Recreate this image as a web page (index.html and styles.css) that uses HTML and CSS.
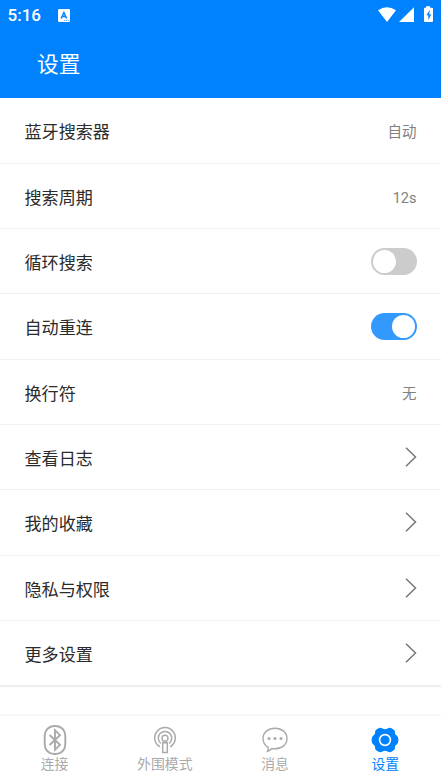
FILE: index.html
```html
<!DOCTYPE html>
<html lang="zh-CN">
<head>
<meta charset="utf-8">
<title>设置</title>
<link rel="stylesheet" href="styles.css">
</head>
<body>
<header class="header">
  <div class="status">
    <span class="time">5:16</span>
    <svg class="badge" width="12" height="13" viewBox="0 0 12 13"><rect width="12" height="13" rx="1.2" fill="#fff"/><path d="M3.2 9.5 5.9 3.5 8.6 9.5M4.2 7.6h3.4" fill="none" stroke="#0082ff" stroke-width="1.5"/><path d="M6.2 11.4h1M8 11.4h1M9.8 11.4h1" stroke="#0082ff" stroke-width=".8"/></svg>
    <svg class="signals" width="56" height="18" viewBox="0 0 56 18"><path d="M0 4.300Q9 -2 18 4.300L9 16Z" fill="#fff"/><path d="M21 16H36V1.200Z" fill="#fff"/><path d="M48 .2h4v1.600h2q1 0 1 1V15q0 1-1 1h-7q-1 0-1-1V2.800q0-1 1-1h1Z" fill="#fff"/><path d="M51.800 4 48.300 9.300h2v4.700l3-5.600h-2Z" fill="#0082ff"/></svg>
  </div>
  <h1 class="title">设置</h1>
</header>
<main class="list">
  <div class="row"><span class="label">蓝牙搜索器</span><span class="value">自动</span></div>
  <div class="row"><span class="label">搜索周期</span><span class="value">12s</span></div>
  <div class="row"><span class="label">循环搜索</span><span class="switch"></span></div>
  <div class="row"><span class="label">自动重连</span><span class="switch on"></span></div>
  <div class="row"><span class="label">换行符</span><span class="value">无</span></div>
  <div class="row"><span class="label">查看日志</span><svg class="arrow" viewBox="0 0 12 20"><path d="M1 .8 10.500 10 1 19.200"/></svg></div>
  <div class="row"><span class="label">我的收藏</span><svg class="arrow" viewBox="0 0 12 20"><path d="M1 .8 10.500 10 1 19.200"/></svg></div>
  <div class="row"><span class="label">隐私与权限</span><svg class="arrow" viewBox="0 0 12 20"><path d="M1 .8 10.500 10 1 19.200"/></svg></div>
  <div class="row"><span class="label">更多设置</span><svg class="arrow" viewBox="0 0 12 20"><path d="M1 .8 10.500 10 1 19.200"/></svg></div>
</main>
<nav class="tabs">
  <div class="tab">
    <svg class="icon" viewBox="0 0 30 30"><rect x="4.700" y="1" width="20.600" height="28" rx="9.500" stroke-width="1.900"/><path d="M9.500 10 20 19.800 15 24.800V5.200L20 10.200 9.500 20" stroke-width="1.900"/></svg>
    <span>连接</span>
  </div>
  <div class="tab">
    <svg class="icon" viewBox="0 0 30 30"><circle cx="15" cy="13.200" r="3"/><path d="M12.700 17.700h4.600v9.800h-4.600ZM10.700 18.300a6.700 6.700 0 1 1 8.600 0M9.800 21.800a10.300 10.300 0 1 1 10.400 0" stroke-width="1.500"/></svg>
    <span>外围模式</span>
  </div>
  <div class="tab">
    <svg class="icon" viewBox="0 0 30 30"><path d="M8.200 22.300C4.700 20.400 3 17.200 3 13.500 3 7.500 8 3.200 15 3.200S27 7.500 27 13.500 22 23.800 15 23.800q-1.600 0-3.100-.3Q10.500 25.500 7.500 26.300 8.500 24.500 8.200 22.300Z" stroke-width="1.400"/><g class="dots"><circle cx="9" cy="13.400" r="1.500"/><circle cx="15" cy="13.400" r="1.500"/><circle cx="21" cy="13.400" r="1.500"/></g></svg>
    <span>消息</span>
  </div>
  <div class="tab active">
    <svg class="icon" viewBox="0 0 30 30"><path class="gear" d="M8.500 3.300Q10.600 2.300 12.400 3.500Q15 5 17.600 3.500Q19.400 2.300 21.500 3.300Q25.300 5 25 8Q25 9.700 26.700 10.400Q28.400 11.400 28.400 15T26.700 19.600Q25 20.300 25 22Q25.300 25 21.500 26.700Q19.400 27.700 17.600 26.500Q15 25 12.400 26.500Q10.600 27.700 8.500 26.700Q4.700 25 5 22Q5 20.300 3.300 19.600Q1.600 18.600 1.600 15T3.300 10.400Q5 9.700 5 8Q4.700 5 8.500 3.300Z"/><circle cx="15" cy="15" r="5.400" stroke="#fff" stroke-width="1.600"/></svg>
    <span>设置</span>
  </div>
</nav>
</body>
</html>
```
FILE: styles.css
```css
* { box-sizing: border-box; }
body {
  margin: 0;
  height: 784px;
  display: flex;
  flex-direction: column;
  overflow: hidden;
  background: #fff;
  color: #2b2b2b;
  font-family: Roboto, "Noto Sans CJK SC", sans-serif;
}
.header { height: 98px; background: #0082ff; color: #fff; }
.status { height: 30px; display: flex; align-items: center; padding: 0 7px 0 7.500px; }
.time { font-size: 17px; font-weight: 500; line-height: 30px; width: 50.500px; }
.signals { margin-left: auto; }
.title { margin: 17px 0 0 37px; font-size: 21.7px; line-height: 35px; font-weight: 400; }
.list { height: 589px; padding-top: 0.3px; border-bottom: 1px solid #eee; }
.row {
  height: 65.33px;
  display: flex;
  align-items: center;
  justify-content: space-between;
  padding: 4px 24.500px 0 24.500px;
  border-bottom: 1px solid #f0f0f0;
  font-size: 17.1px;
  line-height: 27px;
}
.label { padding-top: 1px; }
.value { color: #808080; font-size: 14.5px; padding-top: 1px; }
.switch {
  width: 45.500px;
  height: 27px;
  margin-bottom: 3px;
  display: flex;
  padding: 2px;
  border-radius: 14px;
  background: #ccc;
}
.switch::before { content: ""; width: 23px; height: 23px; border-radius: 50%; background: #fff; }
.switch.on { background: #3399ff; justify-content: flex-end; }
.arrow { width: 12px; height: 20px; margin-bottom: 4px; fill: none; stroke: #777; stroke-width: 1.5; }
.tabs {
  height: 70px;
  margin-top: auto;
  display: flex;
  border-top: 2px solid #f7f7f7;
  color: #aaa;
}
.tab {
  flex: 1;
  display: flex;
  flex-direction: column;
  align-items: center;
  padding: 9px 1px 0 0;
  font-size: 13.800px;
  line-height: 18px;
}
.icon { width: 30px; height: 30px; flex: none; fill: none; stroke: currentColor; stroke-width: 1.4; }
.dots, .gear { fill: currentColor; stroke: none; }
.active { color: #0082ff; }
```
